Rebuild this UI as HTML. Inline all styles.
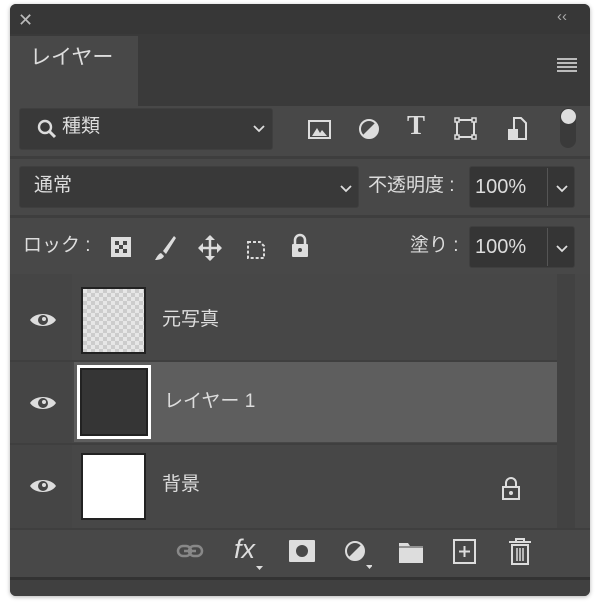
<!DOCTYPE html>
<html><head><meta charset="utf-8"><style>
*{margin:0;padding:0;box-sizing:border-box}
body{width:600px;height:610px;background:#fff;position:relative;overflow:hidden;font-family:"Liberation Sans","Noto Sans CJK JP",sans-serif;color:#ddd}
.a{position:absolute}
.panel{left:10px;top:4px;width:580px;height:592px;background:#484848;border-radius:6px;overflow:hidden;box-shadow:0 1px 4px rgba(0,0,0,.3)}
.box{background:#393939;border:1px solid #3f3f3f;border-radius:3px}
.t{font-size:19px;color:#ddd;white-space:nowrap;line-height:24px}
svg{position:absolute}
</style></head><body>
<div class="a panel">
 <div class="a" style="left:0;top:0;width:580px;height:30px;background:#373737"></div>
 <div class="a" style="left:0;top:30px;width:580px;height:72px;background:#3a3a3a"></div>
 <div class="a" style="left:0;top:32px;width:128px;height:70px;background:#484848"></div>
 <div class="a t" style="left:20px;top:42px;font-size:21px">レイヤー</div>
 <div class="a" style="left:8px;top:6px;font-size:18px;color:#bbb">✕</div>
 <div class="a" style="left:547px;top:4px;font-size:15px;color:#aaa">‹‹</div>
 <div class="a" style="left:547px;top:54px;width:20px;height:2px;background:#bbb;box-shadow:0 4px 0 #bbb,0 8px 0 #bbb,0 12px 0 #bbb"></div>
 <!-- filter row -->
 <div class="a box" style="left:9px;top:104px;width:254px;height:42px"></div>
 <svg style="left:26px;top:114px" width="22" height="22"><circle cx="9" cy="9" r="6" stroke="#ddd" stroke-width="2.4" fill="none"/><path d="M13 13l6 6" stroke="#ddd" stroke-width="3"/></svg>
 <div class="a t" style="left:52px;top:111px">種類</div>
 <svg style="left:243px;top:121px" width="12" height="8"><path d="M1 1l5 5 5-5" fill="none" stroke="#ddd" stroke-width="1.8"/></svg>
 <svg style="left:298px;top:114px" width="24" height="24"><rect x="1" y="3" width="21" height="17" fill="none" stroke="#ddd" stroke-width="2"/><path d="M4 18l5-8 3 5 2-3 5 6z" fill="#ddd"/></svg>
 <svg style="left:348px;top:114px" width="22" height="22"><circle cx="11" cy="11" r="9" fill="none" stroke="#ddd" stroke-width="2"/><path d="M17.4 4.6A9 9 0 0 1 4.6 17.4Z" fill="#ddd"/></svg>
 <div class="a" style="left:397px;top:106px;font-size:27px;font-family:'Liberation Serif',serif;font-weight:bold;color:#ddd">T</div>
 <svg style="left:444px;top:112px" width="24" height="26"><rect x="3" y="4" width="17" height="17" fill="none" stroke="#ddd" stroke-width="2"/><g fill="#484848" stroke="#ddd" stroke-width="1.5"><rect x="1" y="2" width="4" height="4"/><rect x="18" y="2" width="4" height="4"/><rect x="1" y="19" width="4" height="4"/><rect x="18" y="19" width="4" height="4"/></g></svg>
 <svg style="left:496px;top:112px" width="22" height="26"><path d="M8 2h7l5 5v16h-12z" fill="none" stroke="#ddd" stroke-width="2"/><rect x="2" y="13" width="10" height="11" fill="#ddd"/></svg>
 <div class="a" style="left:550px;top:104px;width:16px;height:40px;border-radius:8px;background:#3a3a3a"></div>
 <div class="a" style="left:551px;top:105px;width:15px;height:15px;border-radius:50%;background:#ddd"></div>
 <div class="a" style="left:0;top:152px;width:580px;height:3px;background:#3e3e3e"></div>
 <!-- blend row -->
 <div class="a box" style="left:9px;top:162px;width:340px;height:42px"></div>
 <div class="a t" style="left:24px;top:170px">通常</div>
 <svg style="left:330px;top:181px" width="12" height="8"><path d="M1 1l5 5 5-5" fill="none" stroke="#ddd" stroke-width="1.8"/></svg>
 <div class="a t" style="left:358px;top:170px">不透明度 :</div>
 <div class="a box" style="left:459px;top:162px;width:106px;height:42px;background:#353535"></div>
 <div class="a" style="left:537px;top:164px;width:1px;height:38px;background:#555"></div>
 <div class="a t" style="left:465px;top:171px;font-size:20px">100%</div>
 <svg style="left:546px;top:181px" width="12" height="8"><path d="M1 1l5 5 5-5" fill="none" stroke="#ddd" stroke-width="1.8"/></svg>
 <div class="a" style="left:0;top:211px;width:580px;height:3px;background:#3e3e3e"></div>
 <!-- lock row -->
 <div class="a t" style="left:13px;top:230px">ロック :</div>
 <svg style="left:100px;top:232px" width="22" height="22"><rect x="1" y="1" width="20" height="20" fill="#ddd"/><g fill="#484848"><rect x="5" y="5" width="4" height="4"/><rect x="13" y="5" width="4" height="4"/><rect x="9" y="9" width="4" height="4"/><rect x="5" y="13" width="4" height="4"/><rect x="13" y="13" width="4" height="4"/></g></svg>
 <svg style="left:143px;top:230px" width="24" height="28"><path d="M21 2L10 17l3 3L23 4z" fill="#ddd"/><path d="M8 19c-3 1-4 4-6 7 4 0 8-1 9-4z" fill="#ddd"/></svg>
 <svg style="left:187px;top:230px" width="26" height="28"><path d="M13 2v24M2 14h22" stroke="#ddd" stroke-width="2.5"/><path d="M13 1l-5 5h10zM13 27l-5-5h10zM1 14l5-5v10zM25 14l-5-5v10z" fill="#ddd"/></svg>
 <svg style="left:232px;top:230px" width="28" height="28"><path d="M6 8h12l4 4v12H6z" fill="none" stroke="#ddd" stroke-width="2" stroke-dasharray="3 2"/></svg>
 <svg style="left:280px;top:229px" width="20" height="26"><path d="M5 11V7a5 5 0 0 1 10 0v4" fill="none" stroke="#ddd" stroke-width="2.5"/><rect x="2" y="11" width="16" height="13" rx="1" fill="#ddd"/><circle cx="10" cy="17" r="2" fill="#484848"/></svg>
 <div class="a t" style="left:400px;top:230px">塗り :</div>
 <div class="a box" style="left:459px;top:222px;width:106px;height:42px;background:#353535"></div>
 <div class="a" style="left:537px;top:224px;width:1px;height:38px;background:#555"></div>
 <div class="a t" style="left:465px;top:231px;font-size:20px">100%</div>
 <svg style="left:546px;top:241px" width="12" height="8"><path d="M1 1l5 5 5-5" fill="none" stroke="#ddd" stroke-width="1.8"/></svg>
 <!-- layers -->
 <div class="a" style="left:0;top:270px;width:580px;height:254px;background:#474747"></div>
 <div class="a" style="left:0;top:270px;width:62px;height:254px;background:#454545"></div>
 <div class="a" style="left:547px;top:270px;width:18px;height:254px;background:#424242"></div>
 <div class="a" style="left:0;top:356px;width:547px;height:2px;background:#3f3f3f"></div>
 <div class="a" style="left:64px;top:358px;width:483px;height:80px;background:#5e5e5e"></div>
 <div class="a" style="left:0;top:439px;width:547px;height:2px;background:#3f3f3f"></div>
 <!-- row1 -->
 <svg style="left:18px;top:306px" width="30" height="20"><path d="M2 10C7 2 23 2 28 10 23 18 7 18 2 10z" fill="#ddd"/><circle cx="15" cy="10" r="5" fill="#454545"/><circle cx="16" cy="9" r="2" fill="#ddd"/></svg>
 <div class="a" style="left:71px;top:283px;width:65px;height:67px;background:#222;padding:2px"><div style="width:100%;height:100%;background:#e6e6e6;background-image:linear-gradient(45deg,#ccc 25%,transparent 25%,transparent 75%,#ccc 75%),linear-gradient(45deg,#ccc 25%,transparent 25%,transparent 75%,#ccc 75%);background-size:8px 8px;background-position:0 0,4px 4px"></div></div>
 <div class="a t" style="left:152px;top:304px">元写真</div>
 <!-- row2 -->
 <svg style="left:18px;top:389px" width="30" height="20"><path d="M2 10C7 2 23 2 28 10 23 18 7 18 2 10z" fill="#ddd"/><circle cx="15" cy="10" r="5" fill="#454545"/><circle cx="16" cy="9" r="2" fill="#ddd"/></svg>
 <div class="a" style="left:67px;top:361px;width:74px;height:74px;background:#fff;padding:3px"><div style="width:100%;height:100%;background:#222;padding:2px"><div style="width:100%;height:100%;background:#353535"></div></div></div>
 <div class="a t" style="left:154px;top:386px">レイヤー 1</div>
 <!-- row3 -->
 <svg style="left:18px;top:472px" width="30" height="20"><path d="M2 10C7 2 23 2 28 10 23 18 7 18 2 10z" fill="#ddd"/><circle cx="15" cy="10" r="5" fill="#454545"/><circle cx="16" cy="9" r="2" fill="#ddd"/></svg>
 <div class="a" style="left:71px;top:449px;width:65px;height:67px;background:#222;padding:2px"><div style="width:100%;height:100%;background:#fff"></div></div>
 <div class="a t" style="left:152px;top:469px">背景</div>
 <svg style="left:491px;top:472px" width="20" height="26"><path d="M5 11V7a5 5 0 0 1 10 0v4" fill="none" stroke="#ddd" stroke-width="2"/><rect x="2" y="11" width="16" height="12" fill="none" stroke="#ddd" stroke-width="2"/><circle cx="10" cy="17" r="2" fill="#ddd"/></svg>
 <!-- bottom bar -->
 <div class="a" style="left:0;top:524px;width:580px;height:2px;background:#3f3f3f"></div>
 <svg style="left:166px;top:539px" width="30" height="16"><rect x="2" y="3" width="13" height="10" rx="5" fill="none" stroke="#888" stroke-width="2.5"/><rect x="13" y="3" width="13" height="10" rx="5" fill="none" stroke="#888" stroke-width="2.5"/><path d="M8 8h12" stroke="#888" stroke-width="2.5"/></svg>
 <div class="a" style="left:224px;top:530px;font-size:27px;font-style:italic;font-family:'Liberation Sans',sans-serif;color:#ddd">fx</div>
 <svg style="left:246px;top:562px" width="8" height="6"><path d="M0 0h7l-3.5 4z" fill="#ddd"/></svg>
 <svg style="left:279px;top:536px" width="26" height="22"><rect x="0" y="0" width="26" height="22" rx="1" fill="#ddd"/><circle cx="13" cy="11" r="6" fill="#484848"/></svg>
 <svg style="left:334px;top:536px" width="28" height="30"><circle cx="11" cy="11" r="9" fill="none" stroke="#ddd" stroke-width="2"/><path d="M17.4 4.6A9 9 0 0 1 4.6 17.4Z" fill="#ddd"/><path d="M22 25h7l-3.5 4z" fill="#ddd"/></svg>
 <svg style="left:388px;top:538px" width="26" height="22"><path d="M1 1h9l2 3h13v17H1z" fill="#ddd"/><path d="M1 5h24" stroke="#484848" stroke-width="1"/></svg>
 <svg style="left:443px;top:535px" width="24" height="25"><rect x="1" y="1" width="21" height="23" fill="none" stroke="#ddd" stroke-width="2"/><path d="M11.5 7v11M6 12.5h11" stroke="#ddd" stroke-width="2"/></svg>
 <svg style="left:498px;top:533px" width="24" height="28"><path d="M1 5h22M8 5V2h8v3" fill="none" stroke="#ddd" stroke-width="2"/><path d="M4 8h16v19H4z" fill="none" stroke="#ddd" stroke-width="2"/><path d="M9 11v13M12 11v13M15 11v13" stroke="#ddd" stroke-width="1.5"/></svg>
 <div class="a" style="left:0;top:573px;width:580px;height:3px;background:#333"></div>
 <div class="a" style="left:0;top:576px;width:580px;height:16px;background:#404040"></div>
</div>
</body></html>
